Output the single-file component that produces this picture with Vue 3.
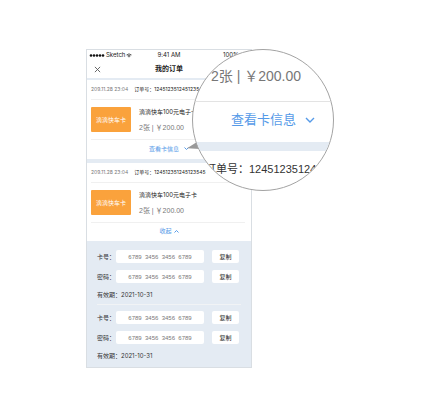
<script setup>
import { ref } from 'vue'

const number = '124512351245123545'
const orders = ref([
  { id: 1, date: '209.11.28 23:04', number, title: '滴滴快车100元电子卡', open: false, cards: [] },
  {
    id: 2,
    date: '209.11.28 23:04',
    number,
    title: '滴滴快车100元电子卡',
    open: true,
    cards: [
      { code: '6789  3456  3456  6789', pin: '6789  3456  3456  6789', expires: '2021-10-31' },
      { code: '6789  3456  3456  6789', pin: '6789  3456  3456  6789', expires: '2021-10-31' },
    ],
  },
])

function copy(text) {
  navigator.clipboard?.writeText(text)
}
</script>

<template>
  <main class="stage">
    <div class="scene">
      <section class="phone">
        <div class="status">
          <span class="carrier">
            <svg class="signal" viewBox="0 0 15 3" aria-hidden="true">
              <circle v-for="n in 5" :key="n" :cx="n * 3 - 1.5" cy="1.5" r="1.3" />
            </svg>
            Sketch
            <svg class="wifi" viewBox="0 0 12 9" aria-hidden="true">
              <path d="M1 3.4Q6 -1 11 3.4M2.8 5.2Q6 2.4 9.2 5.2" />
              <path class="wifi-core" d="M4.2 6.3Q6 4.9 7.8 6.3L6 8.5Z" />
            </svg>
          </span>
          <span>9:41 AM</span>
          <span class="battery">100%</span>
        </div>

        <header class="nav">
          <button class="close" type="button" aria-label="关闭">
            <svg viewBox="0 0 8 8"><path d="M1 1L7 7M7 1L1 7" /></svg>
          </button>
          <h1>我的订单</h1>
        </header>

        <article v-for="order in orders" :key="order.id" class="order">
          <div class="meta">
            <time>{{ order.date }}</time>
            <span class="number">订单号：{{ order.number }}</span>
          </div>
          <div class="product">
            <div class="thumb">滴滴快车卡</div>
            <div class="info">
              <h2>{{ order.title }}</h2>
              <p>2张 | ￥200.00</p>
            </div>
          </div>
          <button class="toggle" :class="{ open: order.open }" type="button" @click="order.open = !order.open">
            {{ order.open ? '收起' : '查看卡信息' }}
            <svg class="chevron" viewBox="0 0 10 6" aria-hidden="true"><path d="M1 1L5 5L9 1" /></svg>
          </button>
          <div v-if="order.open" class="cards">
            <div v-for="(card, i) in order.cards" :key="i" class="card">
              <div class="field">
                <label :for="`code-${i}`">卡号：</label>
                <input :id="`code-${i}`" :value="card.code" type="text" readonly />
                <button type="button" @click="copy(card.code)">复制</button>
              </div>
              <div class="field">
                <label :for="`pin-${i}`">密码：</label>
                <input :id="`pin-${i}`" :value="card.pin" type="text" readonly />
                <button type="button" @click="copy(card.pin)">复制</button>
              </div>
              <p class="expiry">有效期：{{ card.expires }}</p>
            </div>
          </div>
        </article>
      </section>

      <svg class="pointer" viewBox="0 0 14 8" aria-hidden="true"><path d="M1 6.2L11 0L14 7Z" /></svg>
      <aside class="lens">
        <p class="lens-price">2张 | ￥200.00</p>
        <p class="lens-link">
          查看卡信息
          <svg class="chevron" viewBox="0 0 10 6" aria-hidden="true"><path d="M1 1L5 5L9 1" /></svg>
        </p>
        <p class="lens-number">订单号：124512351245</p>
      </aside>
    </div>
  </main>
</template>

<style>
body {
  margin: 0;
  background: #fff;
}
</style>

<style scoped>
* {
  box-sizing: border-box;
}

.stage {
  padding: 49px 88px 41px 86px;
  font-family: 'Liberation Sans', 'Noto Sans CJK SC', sans-serif;
  color: #333;
}

.scene {
  position: relative;
  display: grid;
  grid-template-columns: minmax(166px, 2fr) minmax(82px, 1fr);
}

h1,
h2,
p {
  margin: 0;
  font-weight: 400;
}

button,
input {
  margin: 0;
  padding: 0;
  border: 0;
  font-family: inherit;
  color: inherit;
}

svg {
  fill: none;
  stroke: currentColor;
}

.phone {
  border: 1px solid #d9dee3;
  background: #fff;
}

.status {
  display: grid;
  grid-template-columns: 1fr auto 1fr;
  height: 10px;
  padding: 0 2px;
  align-items: center;
  font: 6px/10px Inter, sans-serif;
  color: #222;
}

.carrier {
  display: flex;
  align-items: center;
  gap: 1px;
}

.signal {
  width: 16px;
  height: 3px;
  fill: #111;
  stroke: none;
}

.wifi {
  width: 6px;
  height: 5px;
  stroke-width: 1.4;
}

.wifi-core {
  fill: currentColor;
  stroke: none;
}

.battery {
  padding-right: 10px;
  text-align: right;
}

.nav {
  display: grid;
  grid-template-columns: 20px 1fr 20px;
  height: 20px;
  align-items: center;
  border-bottom: 2px solid #e4ebf3;
}

.nav h1 {
  font-size: 7px;
  line-height: 10px;
  font-weight: 700;
  text-align: center;
  color: #222;
}

.close {
  display: flex;
  justify-content: flex-end;
  padding-right: 6px;
  background: none;
  color: #555;
}

.close svg {
  width: 7px;
  height: 7px;
  flex: none;
  stroke-width: 1;
}

.order + .order {
  border-top: 4px solid #e4ebf3;
}

.meta {
  display: flex;
  height: 20px;
  margin: 0 6px 0 4px;
  padding-bottom: 2px;
  align-items: center;
  gap: 6px;
  border-bottom: 1px solid #f0f0f0;
  font: 5px/8px Inter, 'Noto Sans CJK SC', sans-serif;
  white-space: nowrap;
}

.meta time {
  color: #777;
}

.number {
  color: #222;
}

.product {
  display: flex;
  height: 40px;
  margin: 0 6px 0 4px;
  align-items: center;
  gap: 8px;
  border-bottom: 1px solid #f0f0f0;
}

.thumb {
  display: grid;
  width: 40px;
  height: 25px;
  place-items: center;
  border-radius: 1px;
  background: #faa23c;
  color: #fff;
  font-size: 6px;
  line-height: 8px;
  white-space: nowrap;
}

.info {
  display: grid;
  gap: 6px;
  white-space: nowrap;
}

.info h2 {
  font: 6px/10px Inter, 'Noto Sans CJK SC', sans-serif;
  color: #222;
}

.info p {
  font-size: 7px;
  line-height: 10px;
  color: #777;
}

.toggle {
  display: flex;
  width: 100%;
  height: 19px;
  padding-bottom: 2px;
  align-items: center;
  justify-content: center;
  gap: 5px;
  background: none;
  color: #559ae8;
  font-size: 6px;
  line-height: 8px;
}

.toggle.open {
  gap: 2px;
  height: 18px;
}

.toggle .chevron {
  width: 5px;
  height: 3px;
  stroke-width: 2;
}

.toggle.open .chevron {
  transform: rotate(180deg);
}

.cards {
  padding: 3px 10px 1px;
  background: #e4ebf3;
}

.card {
  display: grid;
  padding: 6px 0 4px;
  row-gap: 7px;
}

.card + .card {
  border-top: 1px solid #f1f3f5;
  padding-bottom: 5px;
}

.field {
  display: grid;
  grid-template-columns: 19px 1fr 27px;
  padding-right: 2px;
  align-items: center;
  font-size: 6px;
  line-height: 8px;
  white-space: nowrap;
}

.field input {
  width: calc(100% - 8px);
  height: 13px;
  border-radius: 2px;
  background: #fff;
  color: #777;
  font-size: 6px;
  text-align: center;
}

.field button {
  height: 13px;
  border-radius: 2px;
  background: #fff;
  color: #222;
  font-size: 6px;
  line-height: 8px;
}

.expiry {
  font: 6px/10px Inter, 'Noto Sans CJK SC', sans-serif;
}

.pointer {
  position: absolute;
  top: 93px;
  right: 134px;
  width: 14px;
  height: 8px;
  fill: #999;
  stroke: none;
}

.lens {
  position: absolute;
  top: 0;
  right: 0;
  width: 142px;
  height: 142px;
  overflow: hidden;
  border: 1px solid #a3a3a3;
  border-radius: 50%;
  background: #fff;
  white-space: nowrap;
}

.lens-price {
  height: 52px;
  padding: 16px 0 0 18px;
  border-bottom: 1px solid #e3e3e3;
  color: #777;
  font-size: 14px;
  line-height: 20px;
}

.lens-link {
  display: flex;
  height: 49px;
  padding: 0 0 4px 38px;
  align-items: center;
  gap: 9px;
  border-bottom: 9px solid #e4ebf3;
  color: #559ae8;
  font-size: 13px;
  line-height: 20px;
}

.lens-link .chevron {
  width: 10px;
  height: 6px;
  stroke-width: 1.4;
}

.lens-number {
  padding: 8px 0 0 12px;
  color: #333;
  font-size: 11px;
  line-height: 20px;
}
</style>
